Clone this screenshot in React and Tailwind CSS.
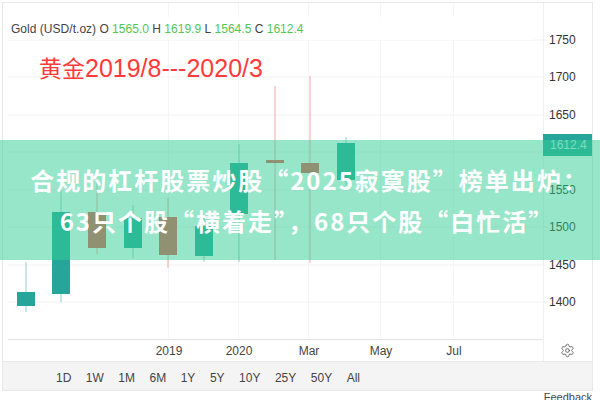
import React from 'react';
import { Settings } from 'lucide-react';

const prices = [
  { label: '1750', y: 40 },
  { label: '1700', y: 77 },
  { label: '1650', y: 115 },
  { label: '1600', y: 152 },
  { label: '1550', y: 190 },
  { label: '1500', y: 227 },
  { label: '1450', y: 265 },
  { label: '1400', y: 302 },
];

const months = [
  { label: '2019', x: 169 },
  { label: '2020', x: 239 },
  { label: 'Mar', x: 309 },
  { label: 'May', x: 381 },
  { label: 'Jul', x: 454 },
];

const UP = '#26a69a';
const DOWN = '#ef5350';

const candles = [
  { x: 26, top: 262, bottom: 312, open: 292, close: 306, color: UP },
  { x: 61, top: 190, bottom: 302, open: 212, close: 294, color: UP },
  { x: 97, top: 182, bottom: 254, open: 212, close: 248, color: DOWN },
  { x: 133, top: 205, bottom: 258, open: 218, close: 248, color: UP },
  { x: 168, top: 198, bottom: 268, open: 217, close: 255, color: DOWN },
  { x: 204, top: 215, bottom: 262, open: 226, close: 256, color: UP },
  { x: 239, top: 144, bottom: 262, open: 163, close: 214, color: UP },
  { x: 275, top: 86, bottom: 260, open: 160, close: 163, color: DOWN },
  { x: 310, top: 76, bottom: 263, open: 163, close: 173, color: DOWN },
  { x: 346, top: 137, bottom: 186, open: 143, close: 180, color: UP },
];

const ranges = ['1D', '1W', '1M', '6M', '1Y', '5Y', '10Y', '25Y', '50Y', 'All'];

const legend = [
  { name: 'O', value: '1565.0' },
  { name: 'H', value: '1619.9' },
  { name: 'L', value: '1564.5' },
  { name: 'C', value: '1612.4' },
];

const Chart = () => (
  <svg width="589" height="358" viewBox="3 3 589 358" className="block" style={{ fontFamily: '"Liberation Sans", Arial, sans-serif' }}>
    {/* grid */}
    {prices.map((p) => (
      <line key={p.label} x1="8" x2="548" y1={p.y} y2={p.y} stroke="#f1f1f3" strokeWidth="1" />
    ))}
    {months.map((m) => (
      <line key={m.label} x1={m.x - 0.5} x2={m.x - 0.5} y1="3" y2="339" stroke="#f3f5f8" strokeWidth="1" />
    ))}
    <line x1="8" x2="543" y1="339.5" y2="339.5" stroke="#e4e4e6" />
    <line x1="543.5" x2="543.5" y1="3" y2="361" stroke="#f0f0f0" />

    {/* candles */}
    {candles.map((c) => (
      <g key={c.x}>
        <line x1={c.x} x2={c.x} y1={c.top} y2={c.bottom} stroke={c.color} strokeWidth="1" opacity="0.5" />
        <rect x={c.x - 9} y={c.open} width="18" height={c.close - c.open} fill={c.color} />
      </g>
    ))}

    {/* price axis */}
    {prices.map((p) => (
      p.label !== '1600' && (
        <text key={p.label} x="549" y={p.y + 4} fontSize="12" fill="#333">{p.label}</text>
      )
    ))}
    <rect x="543" y="134" width="49" height="22" fill="#26a69a" />
    <text x="550" y="149" fontSize="12" fill="#c8ece6">1612.4</text>

    {/* time axis */}
    {months.map((m) => (
      <text key={m.label} x={m.x} y="355" fontSize="12" fill="#444" textAnchor="middle">{m.label}</text>
    ))}
  </svg>
);

export default function App() {
  return (
    <div className="relative w-[600px] h-[400px] overflow-hidden bg-white font-['Liberation_Sans',Arial,sans-serif]">
      {/* chart frame */}
      <div className="ml-[2px] mt-[2px] w-[591px] h-[389px] border border-[#e8e8e8] flex flex-col">
        <Chart />
        <div className="flex-1 bg-[#f4f4f4] border-t border-[#e8e8e8] pt-[4px] flex items-center pl-[53px] gap-[14.5px] text-xs text-[#444]">
          {ranges.map((r) => (
            <span key={r}>{r}</span>
          ))}
        </div>
      </div>

      {/* legend */}
      <div className="absolute left-[8px] top-[17px] w-[526px] h-[23px] bg-white pl-[3px] flex items-center gap-[3.3px] text-xs tracking-[0.03px] text-[#444]">
        <span>Gold (USD/t.oz)</span>
        {legend.map((l) => (
          <span key={l.name} className="flex gap-[3.3px]">
            <span>{l.name}</span>
            <span className="text-[#53c653]">{l.value}</span>
          </span>
        ))}
      </div>

      {/* annotation */}
      <div className="absolute left-[39px] top-[51px] text-[25px] leading-[34px] text-[#ff3b3b] whitespace-nowrap font-['Liberation_Sans','Noto_Sans_CJK_SC',sans-serif]">
        <span className="text-[23px]">黄金</span>2019/8---2020/3
      </div>

      <Settings size={15} strokeWidth={1.5} className="absolute left-[560px] top-[343px] text-[#666]" />

      <div className="absolute right-[8px] top-[392px] text-[11px] leading-none text-[#445]">Feedback</div>

      {/* banner */}
      <div className="absolute left-0 top-[140px] w-full h-[120px] bg-[#31cd93]/50 flex flex-col items-center justify-center pl-[19px] text-white font-bold text-[24px] leading-[41px] tracking-[2px] whitespace-nowrap font-['Noto_Sans_CJK_SC',sans-serif]">
        <div>合规的杠杆股票炒股“2025寂寞股”榜单出炉：</div>
        <div className="mr-[5px]">63只个股“横着走”，68只个股“白忙活”</div>
      </div>
    </div>
  );
}
